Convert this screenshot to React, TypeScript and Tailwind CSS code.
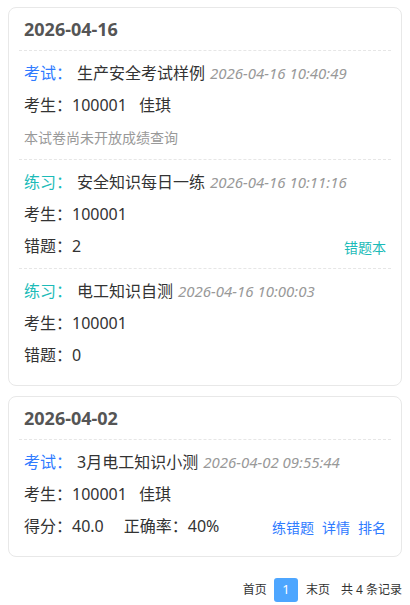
import React from "react";

const font = { fontFamily: '"Noto Sans", "Noto Sans CJK SC", sans-serif' };

function Divider() {
  return <div className="border-t border-dashed border-[#e6e6e6]" />;
}

function Title({ kind, title, time }: { kind: "exam" | "practice"; title: string; time: string }) {
  return (
    <div className="flex h-8 items-center px-[5px] text-[16px] text-[#333] whitespace-nowrap">
      <span className={kind === "exam" ? "text-[#2f7bff]" : "text-[#1cbbb8]"}>
        {kind === "exam" ? "考试：" : "练习："}
      </span>
      <span className="ml-[5px]">{title}</span>
      <span className="ml-[5px] text-[15px] italic text-[#999]">{time}</span>
    </div>
  );
}

function Row({ children, right }: { children: React.ReactNode; right?: React.ReactNode }) {
  return (
    <div className="flex h-8 items-center justify-between px-[5px] text-[16px] text-[#333] whitespace-nowrap">
      <div className="flex items-center">{children}</div>
      {right}
    </div>
  );
}

function Block({ children }: { children: React.ReactNode }) {
  return <div className="py-[6px]">{children}</div>;
}

function Card({ date, children }: { date: string; children: React.ReactNode }) {
  return (
    <div className="mx-2 rounded-[8px] border border-[#e8e8e8] bg-white px-[10px] pb-[8px]">
      <div className="flex h-[42px] items-center px-[5px] text-[18px] font-bold text-[#555]">{date}</div>
      {children}
    </div>
  );
}

export default function App() {
  return (
    <div className="min-h-[605px] w-[410px] bg-white pt-[7px]" style={font}>
      <Card date="2026-04-16">
        <Divider />
        <Block>
          <Title kind="exam" title="生产安全考试样例" time="2026-04-16 10:40:49" />
          <Row>
            <span>考生：100001</span>
            <span className="ml-[12px]">佳琪</span>
          </Row>
          <Row>
            <span className="text-[14px] text-[#999]">本试卷尚未开放成绩查询</span>
          </Row>
        </Block>
        <Divider />
        <Block>
          <Title kind="practice" title="安全知识每日一练" time="2026-04-16 10:11:16" />
          <Row>
            <span>考生：100001</span>
          </Row>
          <Row right={<span className="mt-[3px] text-[14px] text-[#1cbbb8]">错题本</span>}>
            <span>错题：2</span>
          </Row>
        </Block>
        <Divider />
        <Block>
          <Title kind="practice" title="电工知识自测" time="2026-04-16 10:00:03" />
          <Row>
            <span>考生：100001</span>
          </Row>
          <Row>
            <span>错题：0</span>
          </Row>
        </Block>
      </Card>

      <div className="h-[10px]" />

      <Card date="2026-04-02">
        <Divider />
        <Block>
          <Title kind="exam" title="3月电工知识小测" time="2026-04-02 09:55:44" />
          <Row>
            <span>考生：100001</span>
            <span className="ml-[12px]">佳琪</span>
          </Row>
          <Row
            right={
              <div className="mt-[3px] flex gap-[8px] text-[14px] text-[#2f7bff]">
                <span>练错题</span>
                <span>详情</span>
                <span>排名</span>
              </div>
            }
          >
            <span>得分：40.0</span>
            <span className="ml-[20px]">正确率：40%</span>
          </Row>
        </Block>
      </Card>

      <div className="mt-[21px] flex items-center justify-end pr-[8px] text-[12px] text-[#333]">
        <span>首页</span>
        <span className="ml-[7px] flex h-6 w-6 items-center justify-center rounded-[3px] bg-[#4da6ff] text-[13px] text-white">1</span>
        <span className="ml-[8px]">末页</span>
        <span className="ml-[11px]">共 4 条记录</span>
      </div>
    </div>
  );
}
